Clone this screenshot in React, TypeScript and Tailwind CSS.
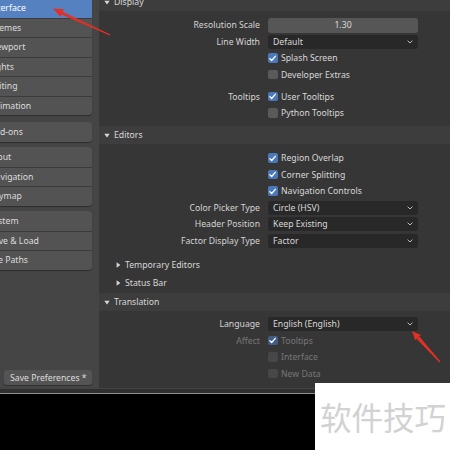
import React from 'react';

const FONT = "font-['Noto_Sans',sans-serif]";

function Chevron() {
  return (
    <svg width="6" height="4" viewBox="0 0 6 4" className="shrink-0">
      <path d="M0.6 0.6 L3 3 L5.4 0.6" stroke="#bdbdbd" strokeWidth="1" fill="none" />
    </svg>
  );
}

function Check() {
  return (
    <svg width="9" height="9" viewBox="0 0 9 9">
      <path d="M1.8 4.6 L3.7 6.5 L7.3 2.3" stroke="#ffffff" strokeWidth="1.3" fill="none" strokeLinecap="round" strokeLinejoin="round" />
    </svg>
  );
}

function TriDown() {
  return (
    <svg width="6" height="5" viewBox="0 0 6 5" className="shrink-0">
      <path d="M0.3 0.8 L5.7 0.8 L3 4.4 Z" fill="#d6d6d6" />
    </svg>
  );
}

function TriRight() {
  return (
    <svg width="5" height="6" viewBox="0 0 5 6" className="shrink-0">
      <path d="M0.6 0.3 L4.4 3 L0.6 5.7 Z" fill="#d6d6d6" />
    </svg>
  );
}

interface RowProps {
  label?: string;
  dim?: boolean;
  children?: React.ReactNode;
}

function Row({ label, dim, children }: RowProps) {
  return (
    <div className="flex h-[16.5px] items-center">
      <div className={`w-[161px] pt-px text-right ${dim ? 'text-[#767676]' : 'text-[#d4d4d4]'}`}>{label}</div>
      <div className="ml-[8px] w-[150px]">{children}</div>
    </div>
  );
}

function Dropdown({ value }: { value: string }) {
  return (
    <div className="flex h-[14px] items-center justify-between rounded-[3px] bg-[#282828] pl-[5px] pr-[5px] text-[#d8d8d8]">
      <span className="pt-px">{value}</span>
      <Chevron />
    </div>
  );
}

function CheckBox({ label, checked, dim }: { label: string; checked?: boolean; dim?: boolean }) {
  let box = 'bg-[#5a5a5a]';
  if (checked) box = dim ? 'bg-[#415d85]' : 'bg-[#4a78bb]';
  else if (dim) box = 'bg-[#474747]';
  return (
    <div className="flex items-center gap-[3.5px]">
      <div className={`flex h-[9.5px] w-[9.5px] items-center justify-center rounded-[2px] ${box}`}>
        {checked && <Check />}
      </div>
      <span className={`pt-px ${dim ? 'text-[#767676]' : 'text-[#d8d8d8]'}`}>{label}</span>
    </div>
  );
}

function PanelHeader({ title, className = '' }: { title: string; className?: string }) {
  return (
    <div className={`flex h-[18px] items-center gap-[4px] bg-[#3d3d3d] pl-[5px] text-[#d8d8d8] ${className}`}>
      <TriDown />
      <span className="pt-px">{title}</span>
    </div>
  );
}

function SubPanel({ title }: { title: string }) {
  return (
    <div className="flex h-[18px] items-center gap-[4px] pl-[17px] text-[#d8d8d8]">
      <TriRight />
      <span className="pt-px">{title}</span>
    </div>
  );
}

const groups: string[][] = [
  ['Interface', 'Themes', 'Viewport', 'Lights', 'Editing', 'Animation'],
  ['Add-ons'],
  ['Input', 'Navigation', 'Keymap'],
  ['System', 'Save & Load', 'File Paths'],
];

const groupGaps = ['-mt-[2px]', 'mt-[7px]', 'mt-[5.5px]', 'mt-[5.5px]'];

function Sidebar() {
  return (
    <div className="-ml-[20px] flex h-full w-[112px] shrink-0 flex-col pb-[4px]">
      {groups.map((items, gi) => (
        <div
          key={gi}
          className={`overflow-hidden rounded-r-[4px] shadow-[0_1px_1px_rgba(0,0,0,0.35)] ${groupGaps[gi]}`}
        >
          {items.map((item, ii) => {
            const active = item === 'Interface';
            return (
              <div
                key={item}
                className={`flex h-[19.5px] items-center pl-[9px] pt-px ${ii > 0 ? 'border-t border-[#3b3b3b]' : ''} ${
                  active ? 'bg-[#5581c1] text-white' : 'bg-[#535353] text-[#dcdcdc]'
                }`}
              >
                {item}
              </div>
            );
          })}
        </div>
      ))}
      <div className="mt-auto ml-[24px] flex h-[15px] w-[88px] items-center rounded-[3px] bg-[#545454] pl-[6px] pt-px text-[#dcdcdc] shadow-[0_1px_1px_rgba(0,0,0,0.3)]">
        Save Preferences *
      </div>
    </div>
  );
}

function Main() {
  return (
    <div className="ml-[7px] flex h-full flex-1 flex-col overflow-hidden">
      <PanelHeader title="Display" className="-mt-[7px]" />
      <div className="h-[115px] bg-[#363636] pt-[6px]">
        <Row label="Resolution Scale">
          <div className="flex h-[15px] items-center justify-center rounded-[3px] bg-[#565656] pt-px text-[#dcdcdc]">1.30</div>
        </Row>
        <Row label="Line Width">
          <Dropdown value="Default" />
        </Row>
        <Row>
          <CheckBox label="Splash Screen" checked />
        </Row>
        <Row>
          <CheckBox label="Developer Extras" />
        </Row>
        <div className="h-[5.5px]" />
        <Row label="Tooltips">
          <CheckBox label="User Tooltips" checked />
        </Row>
        <Row>
          <CheckBox label="Python Tooltips" />
        </Row>
      </div>

      <PanelHeader title="Editors" />
      <div className="h-[149px] bg-[#363636] pt-[6px]">
        <Row>
          <CheckBox label="Region Overlap" checked />
        </Row>
        <Row>
          <CheckBox label="Corner Splitting" checked />
        </Row>
        <Row>
          <CheckBox label="Navigation Controls" checked />
        </Row>
        <Row label="Color Picker Type">
          <Dropdown value="Circle (HSV)" />
        </Row>
        <Row label="Header Position">
          <Dropdown value="Keep Existing" />
        </Row>
        <Row label="Factor Display Type">
          <Dropdown value="Factor" />
        </Row>
        <div className="h-[7px]" />
        <SubPanel title="Temporary Editors" />
        <SubPanel title="Status Bar" />
      </div>

      <PanelHeader title="Translation" />
      <div className="h-[77px] bg-[#363636] pt-[4.75px]">
        <Row label="Language">
          <Dropdown value="English (English)" />
        </Row>
        <Row label="Affect" dim>
          <CheckBox label="Tooltips" checked dim />
        </Row>
        <Row dim>
          <CheckBox label="Interface" dim />
        </Row>
        <Row dim>
          <CheckBox label="New Data" dim />
        </Row>
      </div>
    </div>
  );
}

function Arrows() {
  return (
    <svg className="pointer-events-none absolute left-0 top-0" width="450" height="450" viewBox="0 0 450 450">
      <g fill="#e33025">
        <polygon points="53,8.5 63.9,9.3 60.4,17.1" />
        <polygon points="62.7,11.8 61.4,14.6 109.8,35.5 110.3,34.6" />
        <polygon points="412,331 420.8,335.1 415.2,340.3" />
        <polygon points="419.3,336.5 416.8,338.9 439.5,362.5 440.5,361.5" />
      </g>
    </svg>
  );
}

export default function App() {
  return (
    <div className={`relative h-[450px] w-[450px] overflow-hidden bg-black text-[8.7px] leading-none ${FONT}`}>
      <div className="flex h-[389px] bg-[#454545]">
        <Sidebar />
        <Main />
      </div>
      <div className="h-[4px] bg-[#2f2f2f]" />
      <div className="h-px bg-[#8e8e8e]" />

      <Arrows />

      <div className="absolute left-[315px] top-[383px] flex h-[67px] w-[135px] items-center bg-white pl-[5px]">
        <span className="font-['Noto_Sans_CJK_SC',sans-serif] text-[31.5px] leading-none text-[#d2d2d2]">软件技巧</span>
      </div>
    </div>
  );
}
